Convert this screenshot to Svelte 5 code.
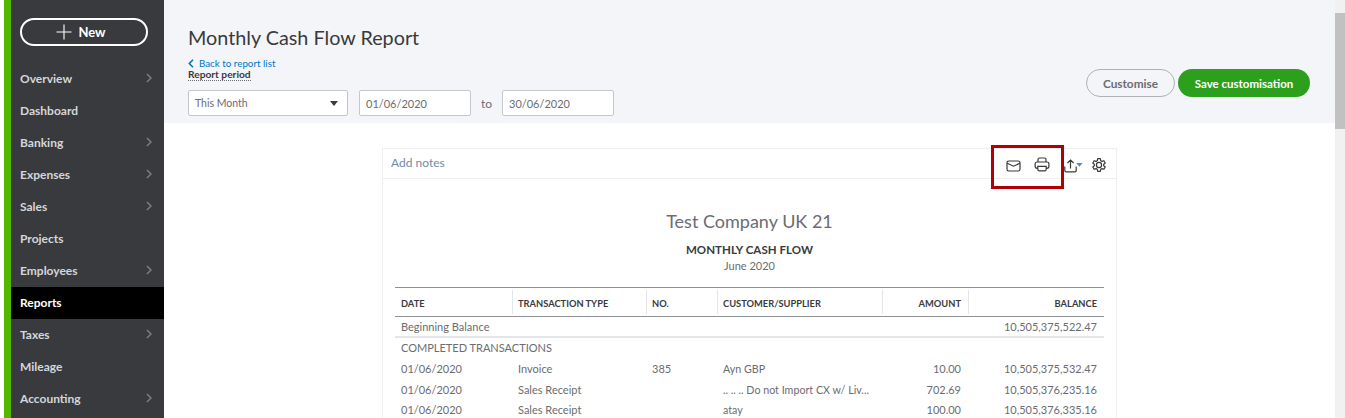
<script>
	const nav = [
		{ label: 'Overview', more: true },
		{ label: 'Dashboard' },
		{ label: 'Banking', more: true },
		{ label: 'Expenses', more: true },
		{ label: 'Sales', more: true },
		{ label: 'Projects' },
		{ label: 'Employees', more: true },
		{ label: 'Reports', active: true },
		{ label: 'Taxes', more: true },
		{ label: 'Mileage' },
		{ label: 'Accounting', more: true }
	];

	const rows = [
		['01/06/2020', 'Invoice', '385', 'Ayn GBP', '10.00', '10,505,375,532.47'],
		['01/06/2020', 'Sales Receipt', '', '.. .. .. Do not Import CX w/ Liv...', '702.69', '10,505,376,235.16'],
		['01/06/2020', 'Sales Receipt', '', 'atay', '100.00', '10,505,376,335.16']
	];
</script>

<div class="page">
	<aside class="side">
		<button class="new">
			<svg width="16" height="16" viewBox="0 0 16 16"><path d="M8 .5v15M.5 8h15" stroke="#fff" stroke-width="1.1" fill="none" /></svg>
			<span>New</span>
		</button>
		<nav>
			{#each nav as item}
				<div class="item" class:active={item.active}>
					<span>{item.label}</span>
					{#if item.more}
						<svg width="6" height="10" viewBox="0 0 6 10"><path d="M1 1l4 4-4 4" stroke="#7c7f82" stroke-width="1.5" fill="none" /></svg>
					{/if}
				</div>
			{/each}
		</nav>
	</aside>

	<main>
		<header class="head">
			<div class="head-left">
				<h1>Monthly Cash Flow Report</h1>
				<a class="back" href="#top">
					<svg width="6" height="9" viewBox="0 0 6 9"><path d="M5 .8L1.3 4.5 5 8.2" stroke="#0077c5" stroke-width="1.6" fill="none" /></svg>
					Back to report list
				</a>
				<div class="period-label"><span>Report period</span></div>
				<div class="filters">
					<div class="field select">This Month <i class="caret"></i></div>
					<div class="field date">01/06/2020</div>
					<span class="to">to</span>
					<div class="field date">30/06/2020</div>
				</div>
			</div>
			<div class="actions">
				<button class="btn ghost">Customise</button>
				<button class="btn save">Save customisation</button>
			</div>
		</header>

		<section class="body">
			<div class="report">
				<div class="notes">
					<span class="add">Add notes</span>
					<div class="tools">
						<svg class="t-mail" width="15" height="12" viewBox="0 0 15 12" fill="none" stroke="#393a3d" stroke-width="1.2"><rect x="1" y="1" width="13" height="10" rx="1.8" /><path d="M1.2 3.2L7.500 6.200l6.300-3" /></svg>
						<svg class="t-print" width="16" height="15" viewBox="0 0 16 15" fill="none" stroke="#393a3d" stroke-width="1.2"><path d="M4 5V2.400C4 1.500 4.500 1 5.400 1h5.200c.9 0 1.400.5 1.400 1.400V5" /><rect x="1.100" y="5" width="13.800" height="6.300" rx="2" /><path d="M3.800 9.300v3c0 1 .6 1.600 1.600 1.600h5.200c1 0 1.600-.6 1.600-1.600v-3z" fill="#fff" /></svg>
						<svg class="t-share" width="19" height="14" viewBox="0 0 19 14" fill="none"><path d="M6.500 9.500V1.200M3.400 4L6.500 1l3.100 3M.8 7.500v3.900c0 .9.500 1.400 1.400 1.400h8.600c.9 0 1.400-.5 1.400-1.400V7.500" stroke="#393a3d" stroke-width="1.200" /><path d="M12.200 4h6.400l-3.200 3.800z" fill="#5b8db8" /></svg>
						<svg class="t-gear" width="16" height="16" viewBox="0 0 16 16" fill="none" stroke="#393a3d" stroke-width="1.200"><path d="M6.700 1h2.600l.4 2 1.300.7 1.900-.7 1.300 2.300-1.500 1.300v1.400l1.500 1.300-1.300 2.300-1.900-.7-1.300.7-.4 2H6.700l-.4-2-1.300-.7-1.900.7-1.300-2.300 1.500-1.300V6.600L1.800 5.300l1.300-2.300 1.900.7 1.300-.7z" stroke-linejoin="round" transform="translate(0 .7)" /><circle cx="8" cy="8" r="2.600" /></svg>
					</div>
				</div>

				<div class="titles">
					<div class="company">Test Company UK 21</div>
					<div class="rname">MONTHLY CASH FLOW</div>
					<div class="rdate">June 2020</div>
				</div>

				<table>
					<colgroup>
						<col class="c1" /><col class="c2" /><col class="c3" /><col class="c4" /><col class="c5" /><col class="c6" />
					</colgroup>
					<thead>
						<tr>
							<th>DATE</th>
							<th>TRANSACTION TYPE</th>
							<th>NO.</th>
							<th>CUSTOMER/SUPPLIER</th>
							<th class="num">AMOUNT</th>
							<th class="num">BALANCE</th>
						</tr>
					</thead>
					<tbody>
						<tr class="begin">
							<td colspan="5">Beginning Balance</td>
							<td class="num">10,505,375,522.47</td>
						</tr>
						<tr class="group">
							<td colspan="6">COMPLETED TRANSACTIONS</td>
						</tr>
						{#each rows as row}
							<tr>
								<td>{row[0]}</td>
								<td>{row[1]}</td>
								<td>{row[2]}</td>
								<td class="cust">{row[3]}</td>
								<td class="num">{row[4]}</td>
								<td class="num">{row[5]}</td>
							</tr>
						{/each}
					</tbody>
				</table>
				<div class="highlight"></div>
			</div>
		</section>
	</main>

	<div class="scrollbar">
		<div class="arrow"></div>
		<div class="thumb"></div>
	</div>
</div>

<style>
	:global(body) {
		margin: 0;
		background: #fff;
		font-family: Lato, 'Open Sans', sans-serif;
	}
	.page {
		display: flex;
		height: 418px;
		overflow: hidden;
		color: #393a3d;
	}
	.side {
		width: 153px;
		flex: none;
		margin-left: 4px;
		border-left: 7px solid #53b700;
		background: #393a3d;
	}
	.new {
		display: flex;
		align-items: center;
		justify-content: center;
		gap: 6px;
		width: 128px;
		height: 28px;
		margin: 18px 0 0 9px;
		padding: 0 6px 0 0;
		border: 2px solid #fff;
		border-radius: 15px;
		background: transparent;
		color: #fff;
		font: 700 13px Lato, sans-serif;
	}
	nav {
		margin-top: 17px;
	}
	.item {
		box-sizing: border-box;
		display: flex;
		align-items: center;
		justify-content: space-between;
		height: 32px;
		padding: 0 12px 2px 9px;
		color: #d4d7dc;
		font-size: 12px;
		font-weight: 700;
	}
	.item.active {
		background: #000;
		color: #fff;
	}
	main {
		flex: 1;
		min-width: 0;
	}
	.head {
		display: flex;
		justify-content: space-between;
		height: 123px;
		box-sizing: border-box;
		padding: 0 25px 0 24px;
		background: #f4f5f8;
	}
	h1 {
		margin: 25px 0 0;
		font-size: 19.800px;
		font-weight: 400;
		line-height: 24px;
	}
	.back {
		display: flex;
		align-items: center;
		gap: 5px;
		margin-top: 8px;
		color: #0077c5;
		font-size: 9.800px;
		line-height: 13px;
		text-decoration: none;
	}
	.period-label {
		margin-top: -2px;
		font-size: 10.200px;
		font-weight: 700;
		line-height: 13px;
	}
	.period-label span {
		display: inline-block;
		border-bottom: 1px dotted #6b6c72;
		line-height: 11px;
	}
	.filters {
		display: flex;
		align-items: center;
		margin-top: 9px;
		font-size: 11px;
		color: #6b6c72;
	}
	.field {
		box-sizing: border-box;
		display: flex;
		align-items: center;
		justify-content: space-between;
		height: 26px;
		padding: 0 6px;
		border: 1px solid #c4c7cc;
		border-radius: 2px;
		background: #fff;
	}
	.select {
		width: 160px;
		margin-right: 11px;
		padding-right: 9px;
		font-size: 10.500px;
	}
	.date {
		width: 112px;
	}
	.caret {
		width: 0;
		height: 0;
		border: 4px solid transparent;
		border-top: 5px solid #393a3d;
		border-bottom: 0;
	}
	.to {
		width: 31px;
		text-align: center;
		font-size: 12px;
	}
	.actions {
		display: flex;
		gap: 3px;
		margin-top: 69px;
		height: 28px;
	}
	.btn {
		box-sizing: border-box;
		height: 28px;
		padding: 0;
		border-radius: 14px;
		font: 700 11.500px Lato, sans-serif;
	}
	.ghost {
		width: 89px;
		border: 1px solid #aeb1b5;
		background: transparent;
		color: #6b6c72;
		font-size: 11.800px;
	}
	.save {
		width: 132px;
		border: 0;
		background: #2ca01c;
		color: #fff;
	}
	.body {
		padding-top: 25px;
		padding-left: 218px;
	}
	.report {
		position: relative;
		box-sizing: border-box;
		width: 735px;
		padding-bottom: 40px;
		border: 1px solid #eceef1;
	}
	.notes {
		display: flex;
		align-items: center;
		justify-content: space-between;
		height: 29px;
		padding-left: 8px;
		border-bottom: 1px solid #eceef1;
		font-size: 12px;
	}
	.add {
		margin-top: -3px;
		color: #6f8ba5;
	}
	.tools {
		display: flex;
		align-items: center;
		margin-top: 2px;
		margin-right: 9px;
	}
	.t-mail {
		margin-top: 2px;
	}
	.t-print {
		margin-left: 13px;
	}
	.t-share {
		margin-left: 14px;
		margin-top: 2px;
	}
	.t-gear {
		margin-left: 8px;
		margin-top: 1px;
	}
	.titles {
		padding-top: 31px;
		text-align: center;
	}
	.company {
		font-size: 18px;
		line-height: 22px;
		color: #6b6c72;
	}
	.rname {
		margin-top: 11px;
		font-size: 11.500px;
		font-weight: 700;
		line-height: 14px;
		letter-spacing: 0.05px;
	}
	.rdate {
		margin-top: 2px;
		font-size: 11px;
		line-height: 14px;
		color: #6b6c72;
	}
	table {
		width: 709px;
		margin: 14px 0 0 12px;
		table-layout: fixed;
		border-collapse: collapse;
		border-top: 1px solid #8d9096;
		font-size: 11px;
		color: #6b6c72;
	}
	.c1 {
		width: 118px;
	}
	.c2 {
		width: 134px;
	}
	.c3 {
		width: 71px;
	}
	.c4 {
		width: 165px;
	}
	.c5 {
		width: 86px;
	}
	.c6 {
		width: 135px;
	}
	th {
		height: 26px;
		padding: 2px 7px 0 5px;
		border-bottom: 1px solid #8d9096;
		background-image: linear-gradient(#e3e5e8, #e3e5e8);
		background-position: right 2px;
		background-size: 1px 24px;
		background-repeat: no-repeat;
		text-align: left;
		font-size: 9.300px;
		font-weight: 700;
		color: #393a3d;
	}
	th:last-child {
		background-image: none;
	}
	td {
		height: 20.500px;
		padding: 0 7px 0 5px;
		white-space: nowrap;
		overflow: hidden;
	}
	th:first-child,
	td:first-child {
		padding-left: 6px;
	}
	.num {
		text-align: right;
	}
	th.num:nth-child(5),
	td.num:nth-child(5) {
		padding-right: 8px;
	}
	.cust {
		font-size: 10.700px;
	}
	.begin td {
		height: 19px;
		border-bottom: 2px solid #e3e5e8;
	}
	.group td {
		height: 18px;
		padding-bottom: 2px;
	}
	.group + tr td {
		height: 21px;
	}
	.highlight {
		position: absolute;
		left: 608px;
		top: -4px;
		width: 67px;
		height: 38px;
		border: 3px solid #b00006;
	}
	.scrollbar {
		width: 10px;
		flex: none;
		background: #f1f1f1;
	}
	.arrow {
		height: 13px;
	}
	.thumb {
		height: 116px;
		background: #c1c1c1;
	}
</style>
